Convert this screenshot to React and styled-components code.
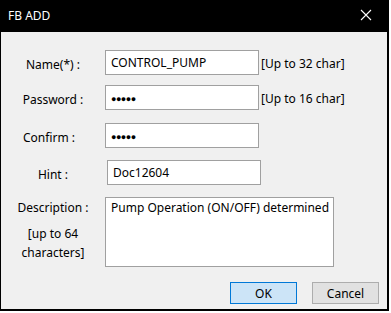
import React from 'react'
import styled, { createGlobalStyle } from 'styled-components'

const GlobalStyle = createGlobalStyle`
  html, body {
    margin: 0;
    padding: 0;
    background: #ffffff;
  }
  body {
    font-family: 'Noto Sans', 'Liberation Sans', sans-serif;
    font-size: 12px;
    color: #000000;
  }
`

const Window = styled.div`
  width: 389px;
  height: 311px;
  box-sizing: border-box;
  background: #000000;
  padding: 0 2px 2px 1px;
  display: flex;
  flex-direction: column;
`

const TitleBar = styled.div`
  height: 30px;
  flex: none;
  display: flex;
  align-items: center;
  justify-content: space-between;
  padding: 0 15px 2px 7px;
  color: #ffffff;
  font-size: 12px;
`

const CloseIcon = () => (
  <svg width="12" height="12" viewBox="0 0 12 12">
    <path d="M1 1 L11 11 M11 1 L1 11" stroke="#ffffff" strokeWidth="1.1" fill="none" />
  </svg>
)

const Body = styled.div`
  flex: 1;
  background: #f0f0f0;
  display: flex;
  flex-direction: column;
  padding: 18px 8px 0 13px;
`

const Row = styled.div`
  display: flex;
  align-items: ${({ top }) => (top ? 'flex-start' : 'center')};
  height: ${({ h }) => h || 25}px;
  margin-bottom: ${({ gap }) => gap ?? 12}px;
`

const Label = styled.div`
  width: 78px;
  flex: none;
  text-align: center;
  padding-top: 3px;
  margin-left: ${({ shift }) => shift || 0}px;
  margin-right: ${({ shift }) => -(shift || 0)}px;
`

const LabelStack = styled.div`
  width: 78px;
  flex: none;
  display: flex;
  flex-direction: column;
  align-items: center;
  padding-top: 1px;
`

const Note = styled.div`
  line-height: 19px;
  margin-top: ${({ space }) => space || 0}px;
`

const Field = styled.div`
  box-sizing: border-box;
  width: ${({ w }) => w || 154}px;
  height: ${({ h }) => h || 25}px;
  margin-left: ${({ shift }) => 13 + (shift || 0)}px;
  background: #ffffff;
  border: 1px solid #a0a0a0;
  padding: ${({ multi }) => (multi ? '1px 5px' : '0 5px')};
  display: flex;
  align-items: ${({ multi }) => (multi ? 'flex-start' : 'center')};
  white-space: nowrap;
  overflow: hidden;
`

const Dots = styled.span`
  font-size: 9px;
  letter-spacing: -0.5px;
  padding-top: 1px;
`

const Hint = styled.div`
  margin-left: 2px;
  padding-top: 2px;
`

const ButtonBar = styled.div`
  display: flex;
  justify-content: flex-end;
  gap: 15px;
  margin-top: 15px;
`

const Button = styled.div`
  box-sizing: border-box;
  width: 67px;
  height: 22px;
  display: flex;
  align-items: center;
  justify-content: center;
  background: ${({ primary }) => (primary ? '#cce4f7' : '#e1e1e1')};
  border: 1px solid ${({ primary }) => (primary ? '#0078d7' : '#adadad')};
  color: #000000;
`

export default function App() {
  return (
    <>
      <GlobalStyle />
      <Window>
        <TitleBar>
          <span>FB ADD</span>
          <CloseIcon />
        </TitleBar>
        <Body>
          <Row gap={10}>
            <Label>Name(*) :</Label>
            <Field>CONTROL_PUMP</Field>
            <Hint>[Up to 32 char]</Hint>
          </Row>
          <Row gap={13}>
            <Label>Password :</Label>
            <Field><Dots>●●●●●</Dots></Field>
            <Hint>[Up to 16 char]</Hint>
          </Row>
          <Row>
            <Label shift={-4}>Confirm :</Label>
            <Field><Dots>●●●●●</Dots></Field>
          </Row>
          <Row>
            <Label>Hint :</Label>
            <Field shift={2}>Doc12604</Field>
          </Row>
          <Row top h={70} gap={0}>
            <LabelStack>
              <Note>Description :</Note>
              <Note space={7}>[up to 64</Note>
              <Note>characters]</Note>
            </LabelStack>
            <Field multi w={229} h={70}>Pump Operation (ON/OFF) determined</Field>
          </Row>
          <ButtonBar>
            <Button primary>OK</Button>
            <Button>Cancel</Button>
          </ButtonBar>
        </Body>
      </Window>
    </>
  )
}
